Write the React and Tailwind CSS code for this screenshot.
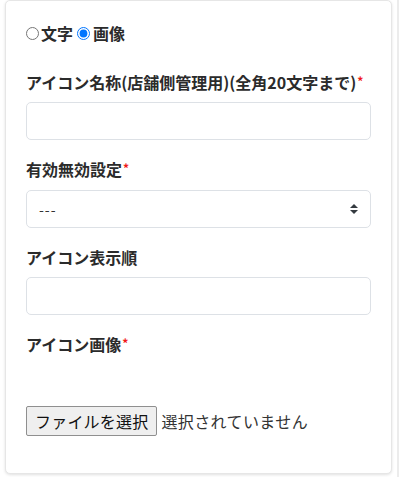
import React from "react";

const font = { fontFamily: '"Noto Sans CJK JP", "Noto Sans", sans-serif' };

function Req() {
  return <span className="text-[#f01818] text-[12px] font-bold align-top leading-[21px] ml-[1px]">*</span>;
}

function Label({ children, req, className = "" }) {
  return (
    <div className={"h-[24px] leading-[24px] text-[16px] font-bold text-[#2b2b2b] whitespace-nowrap " + className}>
      {children}
      {req && <Req />}
    </div>
  );
}

function TextBox({ className = "" }) {
  return <div className={"w-full h-[38px] border border-[#dde1e6] rounded-[5px] bg-white " + className} />;
}

export default function App() {
  return (
    <div className="w-[400px] h-[477px] bg-white flex" style={font}>
      <div className="ml-[5px] mt-0 w-[387px] h-[474px] border border-[#e6e6e6] rounded-[5px] shadow-[0_1px_3px_rgba(0,0,0,0.12)] bg-white px-[20px] pt-[20px]">
        <div className="h-[24px] flex items-center text-[16px] font-bold text-[#2b2b2b]">
          <input type="radio" name="t" className="m-0 w-[13px] h-[13px]" />
          <span className="ml-[2px]">文字</span>
          <input type="radio" name="t" defaultChecked className="m-0 ml-[4px] w-[13px] h-[13px]" />
          <span className="ml-[3px]">画像</span>
        </div>

        <Label req className="mt-[25px] mb-[8px]">アイコン名称(店舗側管理用)(全角20文字まで)</Label>
        <TextBox />

        <Label req className="mt-[17px] mb-[9px]">有効無効設定</Label>
        <div className="w-full h-[38px] border border-[#dde1e6] rounded-[5px] bg-white flex items-center justify-between pl-[12px] pr-[12px]">
          <span className="text-[14px] text-[#333] tracking-[1px]">---</span>
          <svg width="8" height="10" viewBox="0 0 4 5">
            <path d="M2 0L0 2h4zm0 5L0 3h4z" fill="#343a40" />
          </svg>
        </div>

        <Label className="mt-[17px] mb-[8px]">アイコン表示順</Label>
        <TextBox />

        <Label req className="mt-[17px]">アイコン画像</Label>

        <div className="mt-[50px] flex items-center">
          <div className="h-[30px] px-[8px] flex items-center bg-[#efefef] border border-[#8f8f8f] rounded-[2px] text-[16px] text-[#111] tracking-[0.2px]">
            ファイルを選択
          </div>
          <span className="ml-[4px] text-[16px] text-[#333] tracking-[0.4px]">選択されていません</span>
        </div>
      </div>
      <div className="ml-[5px] w-[2px] h-full bg-[#ececec]" />
    </div>
  );
}
